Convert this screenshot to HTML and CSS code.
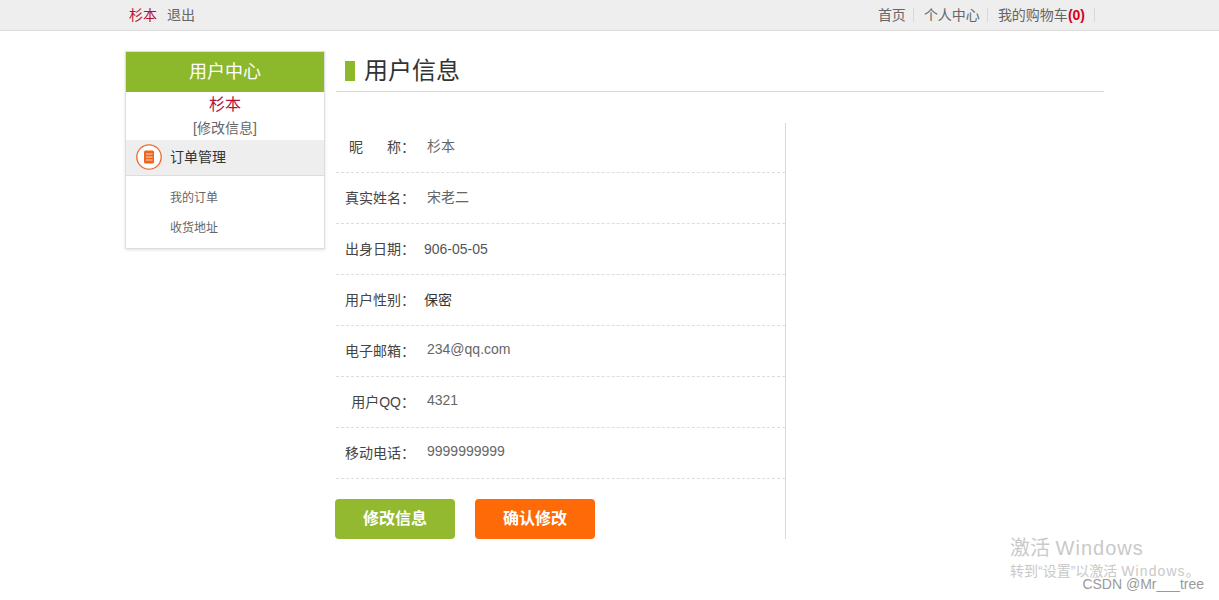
FILE: index.html
```html
<!DOCTYPE html>
<html lang="zh-CN">
<head>
<meta charset="utf-8">
<title>用户信息</title>
<link rel="stylesheet" href="styles.css">
</head>
<body>
<header class="topbar">
  <div class="top-left"><a class="user">杉本</a><a>退出</a></div>
  <nav class="top-right">
    <a>首页</a><a>个人中心</a><a>我的购物车<b>(0)</b></a>
  </nav>
</header>
<div class="wrap">
  <aside class="side">
    <h2 class="side-head">用户中心</h2>
    <div class="side-name">杉本</div>
    <div class="side-edit">[修改信息]</div>
    <div class="side-group">
      <svg class="side-icon" width="26" height="26" viewBox="0 0 26 26">
        <circle cx="13" cy="13" r="12.2" fill="#fff" stroke="#ee6a2c" stroke-width="1.3"/>
        <rect x="8" y="6.5" width="10" height="13" rx="1.5" fill="#ee6420"/>
        <path d="M10 10h6.5M10 13h6.5M10 16h6.5" stroke="#fbd9b0" stroke-width="1.1"/>
      </svg>
      <span class="side-group-label">订单管理</span>
    </div>
    <ul class="side-links">
      <li>我的订单</li>
      <li>收货地址</li>
    </ul>
  </aside>
  <main class="main">
    <div class="title"><i class="title-mark"></i><h1>用户信息</h1></div>
    <div class="form">
      <div class="row"><label class="spread"><span>昵</span><span>称：</span></label><span class="val">杉本</span></div>
      <div class="row"><label>真实姓名：</label><span class="val">宋老二</span></div>
      <div class="row"><label>出身日期：</label><span class="val tight">906-05-05</span></div>
      <div class="row"><label>用户性别：</label><span class="val tight dark">保密</span></div>
      <div class="row"><label>电子邮箱：</label><span class="val">234@qq.com</span></div>
      <div class="row"><label>用户QQ：</label><span class="val">4321</span></div>
      <div class="row"><label>移动电话：</label><span class="val">9999999999</span></div>
      <div class="btns">
        <button class="btn green">修改信息</button>
        <button class="btn orange">确认修改</button>
      </div>
    </div>
  </main>
</div>
<div class="activate">
  <div class="act-1">激活 <span class="act-en">Windows</span></div>
  <div class="act-2">转到“设置”以激活 <span class="act-en">Windows</span>。</div>
</div>
<div class="csdn">CSDN @Mr___tree</div>
</body>
</html>
```
FILE: styles.css
```css
* { box-sizing: border-box; }
html, body { margin: 0; height: 600px; overflow: hidden; }
body {
  position: relative;
  background: #fff;
  color: #555;
  font-family: "Liberation Sans", "Noto Sans CJK SC", sans-serif;
  font-size: 14px;
}
.topbar {
  height: 31px;
  background: #eeeeee;
  border-bottom: 1px solid #dcdcdc;
  display: flex;
  justify-content: space-between;
  padding: 0 124px 0 129px;
  line-height: 30px;
  font-size: 14px;
  color: #666;
}
.top-left a { margin-right: 10px; }
.top-left .user { color: #b3122f; }
.top-right { display: flex; align-items: center; }
.top-right a {
  line-height: 14px;
  padding: 0 9px 0 10px;
  border-right: 1px solid #d8d8d8;
}
.top-right a:first-child { padding-left: 0; padding-right: 7px; }
.top-right a:nth-child(2) { padding-right: 7px; }
.top-right b { color: #d7001a; }
.wrap {
  display: flex;
  padding: 20px 0 0 125px;
  gap: 10px;
}
.side {
  width: 200px;
  height: 198px;
  border: 1px solid #dedede;
  box-shadow: 0 1px 3px rgba(0,0,0,.12);
}
.side-head {
  margin: 0;
  height: 40px;
  background: #8cb82b;
  color: #fff;
  font-size: 18px;
  font-weight: 400;
  line-height: 40px;
  text-align: center;
}
.side-name {
  height: 24px;
  line-height: 26px;
  font-size: 16px;
  color: #b3123a;
  text-align: center;
}
.side-edit {
  height: 24px;
  line-height: 24px;
  text-align: center;
  color: #666;
}
.side-group {
  height: 36px;
  display: flex;
  align-items: center;
  gap: 8px;
  padding: 0 0 2px 10px;
  background: #eeeeee;
  border-bottom: 1px solid #dddddd;
  color: #333;
}
.side-group-label { margin-bottom: 2px; }
.side-links {
  list-style: none;
  margin: 0;
  padding: 7px 0 0 44px;
  font-size: 12px;
  color: #666;
}
.side-links li { height: 30px; line-height: 30px; }
.main { width: 769px; }
.title {
  height: 41px;
  margin-left: 1px;
  display: flex;
  align-items: center;
  gap: 9px;
  padding-left: 9px;
  border-bottom: 1px solid #d9d9d9;
}
.title-mark { width: 10px; height: 20px; background: #8cb82b; }
.title h1 {
  margin: 0 0 6px;
  font-size: 24px;
  font-weight: 400;
  color: #333;
}
.form {
  width: 451px;
  height: 416px;
  margin-top: 31px;
  border-right: 1px solid #d9d9d9;
}
.row {
  height: 51px;
  margin-left: 1px;
  display: flex;
  align-items: center;
  border-bottom: 1px dashed #dddddd;
  padding-bottom: 3px;
}
.row:first-child { height: 50px; padding-bottom: 4px; }
.row label {
  width: 79px;
  text-align: right;
  color: #444;
  flex: none;
  white-space: nowrap;
}
.row label.spread {
  display: flex;
  justify-content: space-between;
  padding-left: 13px;
  text-align: left;
}
.val { margin-left: 12px; color: #666; position: relative; top: -1px; }
.val.tight { margin-left: 9px; top: 1px; color: #555; }
.val.dark { color: #333; top: 0; }
.btns {
  display: flex;
  gap: 20px;
  margin-top: 20px;
}
.btn {
  width: 120px;
  height: 40px;
  border: 0;
  border-radius: 4px;
  padding: 0 0 4px;
  color: #fff;
  font: 700 16px "Liberation Sans", "Noto Sans CJK SC", sans-serif;
}
.green { background: #92b92f; }
.orange { background: #ff6a08; }
.activate {
  position: absolute;
  left: 1010px;
  top: 535px;
  color: #c9c9c9;
}
.act-1 { font-size: 20px; line-height: 26px; white-space: nowrap; }
.act-1 .act-en { letter-spacing: 1px; }
.act-2 { font-size: 14px; line-height: 20px; white-space: nowrap; }
.act-2 .act-en { letter-spacing: 1.1px; }
.csdn {
  position: absolute;
  right: 15px;
  top: 576px;
  font-size: 14px;
  line-height: 16px;
  color: #9a9a9a;
}
```
